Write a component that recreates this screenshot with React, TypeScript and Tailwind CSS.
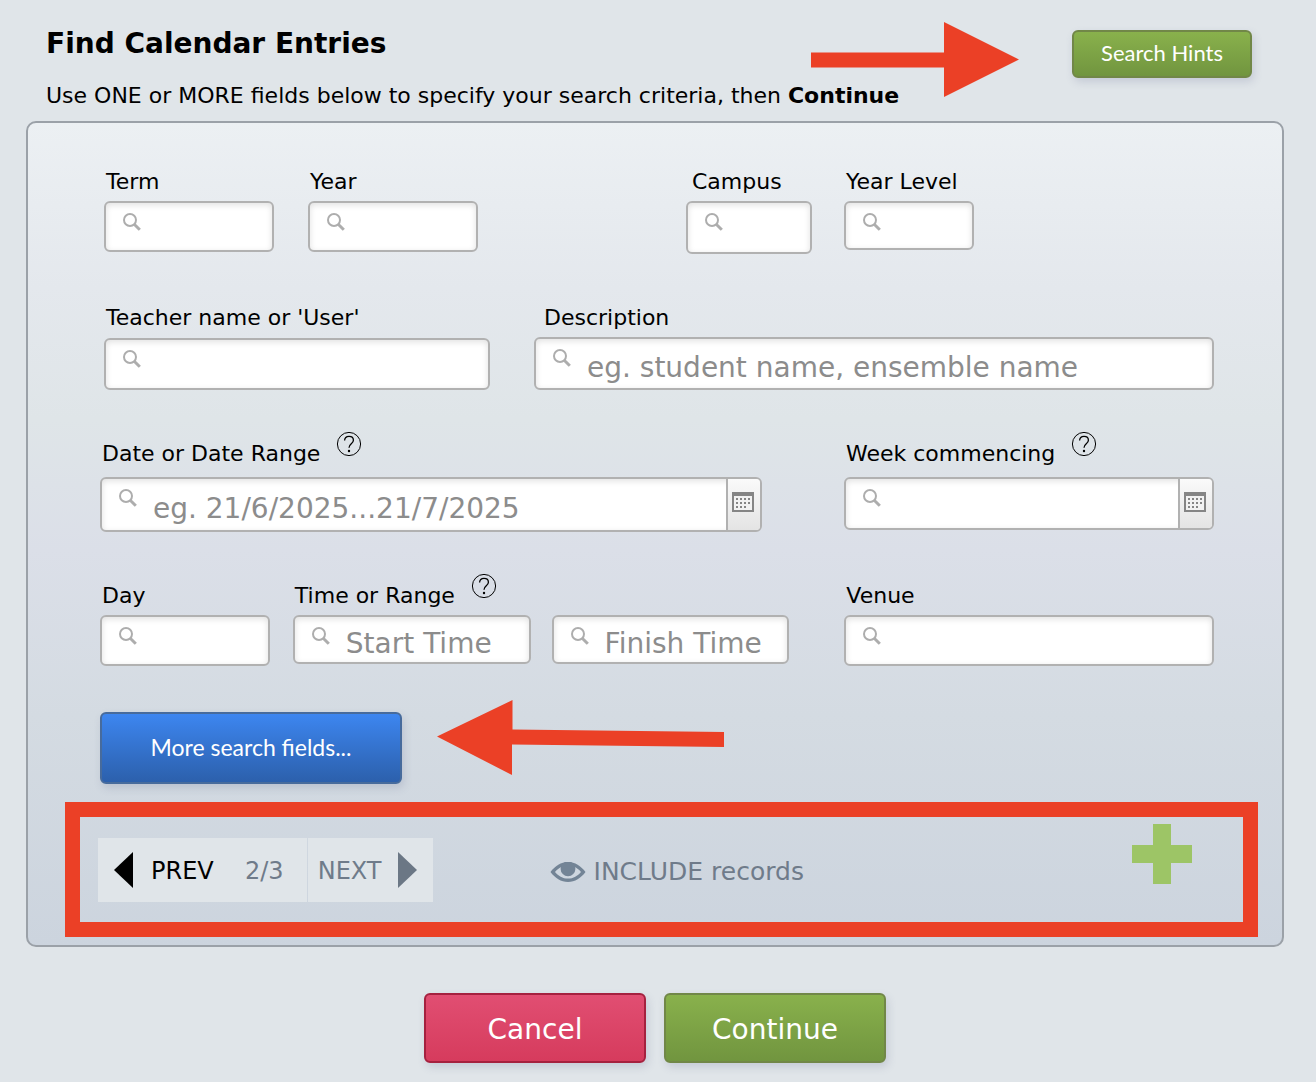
import type { ReactNode } from "react";

function SearchIcon() {
  return (
    <svg viewBox="0 0 18 18" className="mt-[10px] ml-[17px] size-[18px] shrink-0" fill="none" stroke="#adadad" aria-hidden="true">
      <circle cx="7" cy="7" r="6" strokeWidth="2" />
      <path d="M11.2 11.2 16.8 16.8" strokeWidth="3" />
    </svg>
  );
}

function CalendarIcon() {
  return (
    <svg viewBox="0 0 22 20" className="h-5 w-[22px]" aria-hidden="true">
      <rect x="1" y="1" width="20" height="18" fill="#f2f2f2" stroke="#858585" strokeWidth="2" />
      <rect width="22" height="4" fill="#858585" />
      <path d="M4 7h15M4 11h15M4 15h11" stroke="#858585" strokeWidth="2" strokeDasharray="2 2" />
    </svg>
  );
}

function HelpButton({ topic }: { topic: string }) {
  return (
    <button type="button" aria-label={`Help: ${topic}`} className="-mt-2 size-[26px] shrink-0">
      <svg viewBox="0 0 26 26" className="size-full" fill="none" stroke="#000" aria-hidden="true">
        <circle cx="13" cy="13" r="11.6" strokeWidth="1" />
        <path d="M8.6 9.6C8.7 6.9 10.5 5.4 13 5.4c2.5 0 4.4 1.5 4.4 3.8 0 3.5-4.4 3.7-4.4 7.5" strokeWidth="1.3" />
        <circle cx="13" cy="20" r="1.2" fill="#000" stroke="none" />
      </svg>
    </button>
  );
}

type FieldProps = {
  id: string;
  label?: string;
  ariaLabel?: string;
  placeholder?: string;
  className: string;
  boxClass: string;
  labelClass?: string;
  help?: boolean;
  calendar?: boolean;
};

function Field({ id, label, ariaLabel, placeholder, className, boxClass, labelClass = "pl-0.5", help, calendar }: FieldProps) {
  return (
    <div className={`flex min-w-0 flex-col ${className}`}>
      <div className={`flex h-7 items-start gap-4 ${labelClass}`}>
        {label && (
          <label htmlFor={id} className="text-[22px] leading-[30px] whitespace-nowrap">
            {label}
          </label>
        )}
        {help && label && <HelpButton topic={label} />}
      </div>
      <div
        className={`flex items-stretch overflow-hidden rounded-md border-2 border-[#b1b1b1] bg-white shadow-[inset_0_2px_6px_rgba(0,0,0,0.12)] ${boxClass}`}
      >
        <SearchIcon />
        <input
          id={id}
          aria-label={ariaLabel}
          placeholder={placeholder}
          className="ml-4 w-0 min-w-0 flex-1 bg-transparent pt-2 text-[28px] text-[#333] outline-none placeholder:text-[#8c8c8c] placeholder:opacity-100"
        />
        {calendar && (
          <button
            type="button"
            aria-label="Open calendar"
            className="flex w-[34px] shrink-0 items-start justify-start border-l-2 border-[#b1b1b1] bg-linear-to-b from-[#fafafa] to-[#e4e4e4] pt-[13px] pl-1"
          >
            <CalendarIcon />
          </button>
        )}
      </div>
    </div>
  );
}

function Button({ className, children }: { className: string; children: ReactNode }) {
  return (
    <button type="button" className={`rounded-md border-2 text-white ${className}`}>
      {children}
    </button>
  );
}

const green = "border-[#718748] bg-linear-to-b from-[#89b14c] to-[#71953f] shadow-[2px_4px_8px_rgba(90,100,140,0.2)]";

export default function App() {
  return (
    <main className="min-h-screen bg-[#e0e5e9] pr-8 pb-[19px] pl-[26px] font-['Verdana','DejaVu_Sans',sans-serif] text-black">
      <header className="relative flex h-[121px] justify-between pr-8 pl-5">
        <div>
          <h1 className="mt-[26px] text-[28px] leading-9 font-bold">Find Calendar Entries</h1>
          <p className="mt-[18px] text-[22px] leading-8 whitespace-nowrap">
            Use ONE or MORE fields below to specify your search criteria, then <strong>Continue</strong>
          </p>
        </div>
        <Button className={`mt-[30px] h-12 w-[180px] shrink-0 pb-1 font-['Lato',sans-serif] text-[22px] ${green}`}>Search Hints</Button>
        <svg viewBox="0 0 208 75" className="absolute top-[22px] right-[265px] h-[75px] w-[208px]" fill="#eb4026" aria-hidden="true">
          <path d="M0 30.5H133V0L208 37.5 133 75V45.5H0Z" />
        </svg>
      </header>

      <form
        onSubmit={(e) => e.preventDefault()}
        className="rounded-[10px] border-2 border-[#9ba1a8] bg-[linear-gradient(to_bottom,#ecf0f3_0%,#e4e8ed_20%,#dfe5e8_36%,#dbdfe8_52%,#d4dbe2_72%,#ccd4de_100%)] pt-11 pr-6 pb-2 pl-[37px]"
      >
        <div className="flex flex-col gap-[49px] pr-11 pl-[35px]">
          <div className="flex items-start pl-1">
            <Field id="term" label="Term" className="flex-[170]" boxClass="mt-1.5 h-[51px]" />
            <Field id="year" label="Year" className="ml-[34px] flex-[170]" boxClass="mt-1.5 h-[51px]" />
            <Field id="campus" label="Campus" className="ml-[208px] flex-[126]" boxClass="mt-1.5 h-[53px]" labelClass="pl-1.5" />
            <Field id="level" label="Year Level" className="mr-60 ml-8 flex-[130]" boxClass="mt-1.5 h-[49px]" />
          </div>

          <div className="flex items-start pl-1">
            <Field id="teacher" label="Teacher name or 'User'" className="flex-[386]" boxClass="mt-[7px] h-[52px]" />
            <Field
              id="description"
              label="Description"
              placeholder="eg. student name, ensemble name"
              className="ml-11 flex-[680]"
              boxClass="mt-1.5 h-[53px]"
              labelClass="pl-2.5"
            />
          </div>

          <div className="flex items-start">
            <Field
              id="date"
              label="Date or Date Range"
              placeholder="eg. 21/6/2025...21/7/2025"
              className="flex-[662]"
              boxClass="mt-2.5 h-[55px]"
              help
              calendar
            />
            <Field id="week" label="Week commencing" className="ml-[82px] flex-[370]" boxClass="mt-2.5 h-[53px]" help calendar />
          </div>

          <div className="flex items-start">
            <Field id="day" label="Day" className="flex-[170]" boxClass="mt-1.5 h-[51px]" />
            <Field id="start" label="Time or Range" placeholder="Start Time" className="ml-[23px] flex-[238]" boxClass="mt-1.5 h-[49px]" help />
            <Field id="finish" ariaLabel="Finish Time" placeholder="Finish Time" className="ml-[21px] flex-[238]" boxClass="mt-1.5 h-[49px]" />
            <Field id="venue" label="Venue" className="ml-[55px] flex-[370]" boxClass="mt-1.5 h-[51px]" />
          </div>
        </div>

        <div className="relative mt-[46px] ml-[35px]">
          <Button className="h-[72px] w-[302px] border-[#476b9c] bg-linear-to-b from-[#3d86f0] to-[#2c60ac] pb-0.5 font-['Lato',sans-serif] text-[23px] shadow-[2px_4px_8px_rgba(90,100,140,0.2)]">
            More search fields...
          </Button>
          <svg viewBox="0 0 287 75" className="absolute -top-3 left-[337px] h-[75px] w-[287px]" fill="#eb4026" aria-hidden="true">
            <path d="M0 36.5 75.5 0V29.5L287 32V47L75 44.5V75Z" />
          </svg>
        </div>

        <div className="mt-[18px] flex h-[135px] items-start border-[15px] border-[#eb4026] pr-[51px] pl-[18px]">
          <div className="mt-[21px] flex h-16 text-[24px] text-[#6f7b8a]">
            <button type="button" className="flex items-center gap-[18px] bg-[#e0e5e9] pl-4 text-black">
              <svg viewBox="0 0 19 36" className="h-9 w-[19px]" aria-hidden="true">
                <path d="M19 0V36L0 18Z" />
              </svg>
              <span className="pt-0.5">PREV</span>
            </button>
            <span className="flex w-[93px] items-center justify-center bg-[#e0e5e9] pt-0.5 pl-2">2/3</span>
            <button type="button" className="ml-px flex items-center gap-4 bg-[#e0e5e9] pr-4 pl-2.5">
              <span className="pt-0.5">NEXT</span>
              <svg viewBox="0 0 19 36" className="h-9 w-[19px]" fill="#6b7785" aria-hidden="true">
                <path d="M0 0V36L19 18Z" />
              </svg>
            </button>
          </div>
          <button type="button" className="mt-[39px] ml-[117px] flex items-center gap-2 text-[25px] leading-8 text-[#6f7b8a]">
            <svg viewBox="0 0 36 20" className="h-5 w-9" aria-hidden="true">
              <path
                fillRule="evenodd"
                d="M.5 10C5 4 11 0 18 0s13 4 17.5 10C31 16 25 20 18 20S5 16 .5 10ZM5 10C8.500 14 12.500 16.600 18 16.600S27.500 14 31 10C29 7.500 27 6 24 4.500L18 3 12 4.500C9 6 7 7.500 5 10Z"
                fill="#738496"
              />
              <circle cx="18" cy="6.8" r="7.4" fill="#738496" />
            </svg>
            INCLUDE records
          </button>
          <button type="button" aria-label="Add request" className="mt-[7px] ml-auto size-[60px]">
            <svg viewBox="0 0 60 60" className="size-full" fill="#9dc566" aria-hidden="true">
              <path d="M21 0H39V21H60V39H39V60H21V39H0V21H21Z" />
            </svg>
          </button>
        </div>
      </form>

      <div className="mt-[46px] flex justify-center gap-[18px] text-[28px]">
        <Button className="h-[70px] w-[222px] border-[#a5213f] bg-linear-to-b from-[#e14e72] to-[#d63b5d] pt-1 shadow-[2px_4px_8px_rgba(90,100,140,0.2)]">
          Cancel
        </Button>
        <Button className={`h-[70px] w-[222px] pt-1 ${green}`}>Continue</Button>
      </div>
    </main>
  );
}
